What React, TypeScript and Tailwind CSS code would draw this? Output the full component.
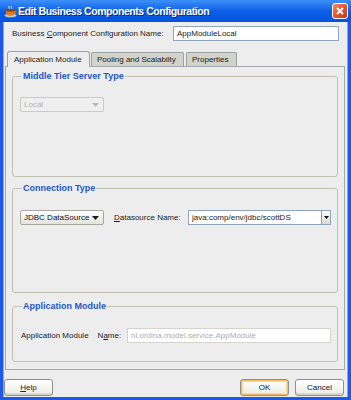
import type { ReactNode } from "react";

const Arrow = ({ disabled }: { disabled?: boolean }) => (
  <svg width="7" height="4" viewBox="0 0 7 4" className="shrink-0">
    <path d="M0 0h7L3.5 4z" fill={disabled ? "#b8b8b8" : "#1a1a1a"} />
  </svg>
);

const Group = ({ title, className, children }: { title: string; className: string; children: ReactNode }) => (
  <fieldset className={`border border-[#c2c2b2] rounded-[3px] px-[7px] ${className}`}>
    <legend className="ml-[2px] px-[1px] text-[9px] leading-[11px] font-bold text-[#1f55c9]">{title}</legend>
    {children}
  </fieldset>
);

const Combo = ({ label, disabled }: { label: string; disabled?: boolean }) => (
  <div
    className={`w-[84px] h-[15px] flex items-center justify-between pl-[3px] pr-[4px] rounded-[2px] border ${
      disabled
        ? "border-[#cbcbc0] bg-[#efefef] text-[#b2b2a8]"
        : "border-[#a7a7a0] bg-gradient-to-b from-[#ffffff] to-[#e4e4dc] text-[#111]"
    }`}
  >
    <span className="whitespace-nowrap">{label}</span>
    <Arrow disabled={disabled} />
  </div>
);

const Button = ({ children, focused, className }: { children: ReactNode; focused?: boolean; className?: string }) => (
  <div
    className={`h-[17px] w-[49px] flex items-center justify-center rounded-[3px] border border-[#8f8f8f] text-[#222] ${
      focused ? "shadow-[inset_0_0_0_1px_#f5c068,inset_0_0_0_2px_#fbd890]" : "shadow-[inset_0_-2px_0_#d6d6ce]"
    } bg-gradient-to-b from-[#ffffff] to-[#ebebe5] ${className ?? ""}`}
  >
    {children}
  </div>
);

export default function App() {
  return (
    <div className="w-[351px] h-[400px] flex flex-col bg-[#1f58e2] font-['Liberation_Sans',Arial,sans-serif] text-[8px] leading-[10px] text-[#1a1a1a] overflow-hidden">
      {/* title bar */}
      <div className="h-[22px] flex items-center pl-[4px] pr-[3px] bg-gradient-to-b from-[#3d90fa] via-[#0b5fe6] to-[#0553dc] shrink-0">
        <svg width="13" height="13" viewBox="0 0 13 13" className="shrink-0">
          <path d="M5 1c-1 1 1 2 0 3M7.5 1c-1 1 1 2 0 3" stroke="#f4f4f4" strokeWidth="1" fill="none" />
          <ellipse cx="6.5" cy="10.5" rx="6" ry="1.8" fill="#c9c9c9" />
          <path d="M2 5.5h9v2c0 2-2 3.3-4.5 3.3S2 9.5 2 7.5z" fill="#e07a1c" />
          <ellipse cx="6.5" cy="5.5" rx="4.5" ry="1" fill="#8a3c0c" />
          <path d="M11 6.2c1.6 0 1.6 2.4 0 2.4" stroke="#e07a1c" strokeWidth="1" fill="none" />
        </svg>
        <span className="ml-[1px] text-white font-bold text-[10.5px] tracking-[-0.45px] leading-[12px] [text-shadow:1px_1px_0_#0a2a8a]">
          Edit Business Components Configuration
        </span>
        <div className="ml-auto w-[16px] h-[16px] rounded-[3px] border border-white bg-gradient-to-br from-[#f08a66] via-[#e3572c] to-[#c8381a] flex items-center justify-center">
          <svg width="8" height="8" viewBox="0 0 8 8">
            <path d="M1 1l6 6M7 1L1 7" stroke="white" strokeWidth="1.8" />
          </svg>
        </div>
      </div>

      {/* body */}
      <div className="flex-1 mx-[3px] mb-[3px] bg-[#ededed] flex flex-col border-l border-r border-[#8fa0f0]">
        <div className="flex items-center pt-[4px] pl-[8px] pr-[8px]">
          <span>
            Business <span className="underline">C</span>omponent Configuration Name:
          </span>
          <div className="ml-auto w-[166px] h-[15px] bg-white border border-[#8fa4c0] flex items-center pl-[3px]">
            AppModuleLocal
          </div>
        </div>

        {/* tabs */}
        <div className="flex items-end mt-[10px] pl-[3px] h-[15px]">
          <div className="relative z-10 w-[83px] h-[16px] -mb-[1px] bg-[#ededed] border border-b-0 border-[#9aa2a3] rounded-t-[3px] flex items-center pl-[6px]">
            Application Module
          </div>
          <div className="w-[93px] h-[14px] ml-[1px] bg-[#d3d3c9] border border-b-0 border-[#9aa2a3] rounded-t-[2px] flex items-center pl-[5px]">
            Pooling and Scalabilty
          </div>
          <div className="w-[51px] h-[14px] ml-[2px] bg-[#d3d3c9] border border-b-0 border-[#9aa2a3] rounded-t-[2px] flex items-center pl-[5px]">
            Properties
          </div>
        </div>

        {/* tab panel */}
        <div className="ml-[1px] mr-[2px] h-[304px] border border-[#a3a9aa] flex flex-col px-[6px] pt-[4px]">
          <Group title="Middle Tier Server Type" className="h-[106px]">
            <div className="mt-[15px]">
              <Combo label="Local" disabled />
            </div>
          </Group>

          <Group title="Connection Type" className="h-[110px] mt-[6px]">
            <div className="mt-[16px] flex items-center">
              <Combo label="JDBC DataSource" />
              <span className="ml-[10px]">
                <span className="underline">D</span>atasource Name:
              </span>
              <div className="ml-auto mr-[-1px] w-[143px] h-[15px] bg-white border border-[#8fa4c0] flex items-center">
                <span className="pl-[3px] flex-1">java:comp/env/jdbc/scottDS</span>
                <div className="w-[9px] h-[13px] border-l border-[#9a9a9a] bg-gradient-to-b from-[#fafafa] to-[#dcdcd4] flex items-center justify-center">
                  <svg width="5" height="3" viewBox="0 0 5 3">
                    <path d="M0 0h5L2.5 3z" fill="#111" />
                  </svg>
                </div>
              </div>
            </div>
          </Group>

          <Group title="Application Module" className="h-[61px] mt-[8px]">
            <div className="mt-[16px] flex items-center">
              <span className="ml-[1px]">Application Module</span>
              <span className="ml-[9px]">
                N<span className="underline">a</span>me:
              </span>
              <div className="ml-auto mr-[-1px] w-[204px] h-[15px] bg-white border border-[#d4d4cc] text-[#aeaeae] flex items-center pl-[3px]">
                nl.ordina.model.service.AppModule
              </div>
            </div>
          </Group>
        </div>

        {/* buttons */}
        <div className="flex items-center mt-[9px] pl-[0px] pr-[3px]">
          <Button>
            <span>
              <span className="underline">H</span>elp
            </span>
          </Button>
          <Button focused className="ml-auto w-[48px]">OK</Button>
          <Button className="ml-[6px]">Cancel</Button>
        </div>
      </div>
    </div>
  );
}
